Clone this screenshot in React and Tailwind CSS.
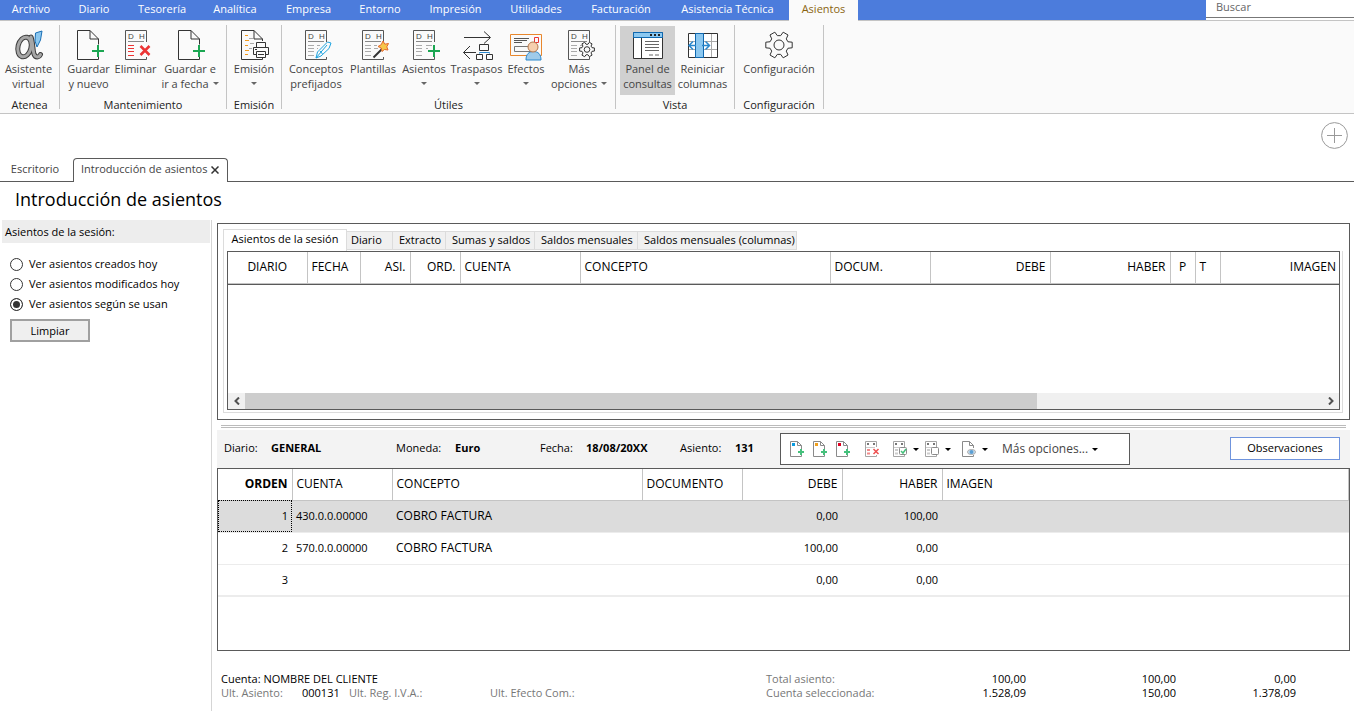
import { useState } from 'react';
import { clsx } from 'clsx';

const MENU = [
    { label: 'Archivo', width: 'w-[62px]' },
    { label: 'Diario', width: 'w-[64px]' },
    { label: 'Tesorería', width: 'w-[72px]' },
    { label: 'Analítica', width: 'w-[74px]' },
    { label: 'Empresa', width: 'w-[73px]' },
    { label: 'Entorno', width: 'w-[70px]' },
    { label: 'Impresión', width: 'w-[81px]' },
    { label: 'Utilidades', width: 'w-[80px]' },
    { label: 'Facturación', width: 'w-[90px]' },
    { label: 'Asistencia Técnica', width: 'w-[123px]' },
    { label: 'Asientos', width: 'w-[69px]', active: true },
];

/* ---------- Ribbon icons (32x32 grid) ---------- */

const Icon = ({ children }) => (
    <svg width="32" height="32" viewBox="0 0 32 32" fill="none" className="shrink-0" aria-hidden="true">
        {children}
    </svg>
);

const Plus = ({ x, y }) => (
    <path d={`M${x} ${y - 6}v12M${x - 6} ${y}h12`} stroke="#1ba652" strokeWidth="2" />
);

const AteneaIcon = () => (
    <Icon>
        <g stroke="#3c3c3c" strokeWidth="5" strokeLinecap="round">
            <ellipse cx="11.500" cy="18" rx="6.500" ry="10" transform="rotate(14 11.5 18)" />
            <path d="M18 8c2 5 1.500 12 3 17 1.500 4 5 3.500 6.500.500" />
        </g>
        <g stroke="#a6a6a6" strokeWidth="3" strokeLinecap="round">
            <ellipse cx="11.500" cy="18" rx="6.500" ry="10" transform="rotate(14 11.5 18)" />
            <path d="M18 8c2 5 1.500 12 3 17 1.500 4 5 3.500 6.500.500" />
        </g>
        <path d="M22.500 4 29 2l-1.500 9L24 18l-2-6z" fill="#8cc8f0" stroke="#1a6fb5" />
    </Icon>
);

const NewPageIcon = () => (
    <Icon>
        <path d="M25.5 15.500V10L17 1.500H4.500v29h21v-3M17 1.500V10h8.500" stroke="#333" />
        <Plus x={25} y={22} />
    </Icon>
);

// Debe / Haber sheet shared by several commands
const LedgerSheet = ({ lines = '#aaa', children }) => (
    <>
        <path d="M26.500 13V1.500h-21v29h21V28" stroke="#555" />
        <text x="8" y="10" fontSize="8" fill="#444" className="font-['Liberation_Sans',sans-serif]">D</text>
        <text x="19" y="10" fontSize="8" fill="#444" className="font-['Liberation_Sans',sans-serif]">H</text>
        <path d="M8 12.500h16" stroke="#888" />
        <path d="M8 16.500h6M8 19.500h6M8 22.500h6M8 26.500h6" stroke={lines} />
        {children}
    </>
);

const DeleteIcon = () => (
    <Icon>
        <LedgerSheet lines="#ec3434" />
        <path d="m20.500 17 9 9m0-9-9 9" stroke="#ec3434" strokeWidth="2.500" />
    </Icon>
);

const PrintIcon = () => (
    <Icon>
        <path d="M24.500 12v-2L16 1.500H3.500v29h21V28M16 1.500V10h8.500" stroke="#333" />
        <path d="M7 6.500h3M7 11.500h4M7 16.500h3M7 21.500h4M7 25.500h3" stroke="#f29a1f" />
        <path d="M11 9.500h4M12 14.500h4M11 19.500h3" stroke="#aaa" />
        <path d="M18.500 18v-4.500h9V18M18.500 25.500h-3V18.500h15v7h-3M18.500 22.500h9v6h-9zM20 25.500h6" stroke="#333" fill="#fafafa" />
        <path d="M17 20.500h2" stroke="#333" />
    </Icon>
);

const PenIcon = () => (
    <Icon>
        <LedgerSheet>
            <path d="M17 16.500h3M17 19.500h1" stroke="#aaa" />
        </LedgerSheet>
        <path d="m16 29 1.500-6L27.500 13l3.500 1-2 5.500-8 7.500z" fill="#fafafa" stroke="#1ba3e0" />
        <path d="m16 29 11-13M20 22l2.500 3" stroke="#1ba3e0" />
    </Icon>
);

const WandIcon = () => (
    <Icon>
        <LedgerSheet>
            <path d="M17 16.500h3M17 19.500h4" stroke="#aaa" />
        </LedgerSheet>
        <path d="m16.500 28.500 9-9" stroke="#333" strokeWidth="2" />
        <path d="m26 12 1.800 3.200 3.700-.7-1.700 3.300L31 21l-3.500-.5-2.500 2-.8-3.500-3.200-1.500 3.200-1.800z" fill="#f7c64a" stroke="#e5682a" />
    </Icon>
);

const AddEntryIcon = () => (
    <Icon>
        <LedgerSheet>
            <path d="M18 16.500h6M18 19.500h2" stroke="#aaa" />
        </LedgerSheet>
        <Plus x={26} y={22} />
    </Icon>
);

const TransferIcon = () => (
    <Icon>
        <path d="M3 8.500h26M23 2.500l6.500 6-6.500 6M15 23.500H2.500M9 17l-6.500 6.500L9 30" stroke="#333" />
        <path d="M18.500 15.500h9v6h-9zM15.500 25.500h6v5h-6zM25.500 25.500h6v5h-6z" stroke="#333" />
        <path d="M18.500 24.500v-1h10v1" stroke="#2a87cc" />
    </Icon>
);

const EffectsIcon = () => (
    <Icon>
        <path d="M.5 5.500h31v21H.5z" stroke="#e8872d" />
        <path d="M4 9.500h15M4 11.500h13M4 13.500h8" stroke="#555" />
        <path d="M24.500 8.500h4v5h-4z" stroke="#ec3434" />
        <path d="M4.500 17.500h17v5h-17z" stroke="#777" />
        <path d="M16 31c0-6 3-8.500 7.500-8.500S31 25 31 31z" fill="#9fcbea" stroke="#2a87cc" />
        <circle cx="23" cy="18" r="5" fill="#f6cfae" stroke="#b5784c" />
    </Icon>
);

// Six-toothed gear outline: root, tooth, root for every 60 degrees
const GEAR_PATH = `M${[0, 60, 120, 180, 240, 300]
    .flatMap((angle) => [
        [angle - 20, 9.5],
        [angle - 12, 13.5],
        [angle + 12, 13.5],
        [angle + 20, 9.5],
    ])
    .map(([deg, r]) => {
        const rad = (deg * Math.PI) / 180;
        return `${(r * Math.cos(rad)).toFixed(2)} ${(r * Math.sin(rad)).toFixed(2)}`;
    })
    .join('L')}Z`;

const Gear = ({ cx, cy, scale }) => (
    <g transform={`translate(${cx} ${cy}) scale(${scale})`} stroke="#333" strokeLinejoin="round">
        <path d={GEAR_PATH} fill="#fafafa" vectorEffect="non-scaling-stroke" />
        <circle r="5" vectorEffect="non-scaling-stroke" />
    </g>
);

const MoreIcon = () => (
    <Icon>
        <LedgerSheet>
            <path d="M17 16.500h2" stroke="#aaa" />
        </LedgerSheet>
        <Gear cx={24} cy={20.5} scale={0.56} />
    </Icon>
);

const PanelIcon = () => (
    <Icon>
        <path d="M1.500 3.500h29v26h-29z" fill="#fff" stroke="#333" />
        <path d="M1.500 3.500h29v5h-29z" fill="#8cc8f0" stroke="#0f68b0" />
        <path d="M18 6h2M22 6h2M26 6h2" stroke="#222" strokeWidth="2" />
        <path d="M9.500 9v20" stroke="#333" />
        <path d="M13 12.500h14M13 15.500h14M13 18.500h14M13 21.500h14M17 26h4M23 26h4" stroke="#666" />
    </Icon>
);

const ColumnsIcon = () => (
    <Icon>
        <path d="M1.500 4.500h29v24h-29z" fill="#fff" stroke="#333" />
        <path d="M2 12.500h28M2 20.500h28M24.500 5v23" stroke="#aaa" />
        <path d="M8.500 4.500h8v24h-8z" fill="#8cc8f0" stroke="#0f68b0" />
        <path d="M9 16.500H2M6 12.500l-4 4 4 4M15 16.500h8M18.500 12.500l4 4-4 4" stroke="#2a87cc" strokeWidth="1.500" />
    </Icon>
);

const SettingsIcon = () => (
    <Icon>
        <Gear cx={16} cy={16} scale={1} />
    </Icon>
);

const RIBBON = [
    {
        title: 'Atenea',
        width: 'w-[60px]',
        padding: 'px-0',
        items: [{ icon: AteneaIcon, lines: ['Asistente', 'virtual'], width: 'w-[57px]' }],
    },
    {
        title: 'Mantenimiento',
        width: 'w-[167px]',
        padding: 'pl-[2px]',
        items: [
            { icon: NewPageIcon, lines: ['Guardar', 'y nuevo'], width: 'w-[53px]' },
            { icon: DeleteIcon, lines: ['Eliminar'], width: 'w-[41px]' },
            { icon: NewPageIcon, lines: ['Guardar e', 'ir a fecha'], width: 'w-[68px]', arrow: true },
        ],
    },
    {
        title: 'Emisión',
        width: 'w-[55px]',
        padding: 'px-0',
        items: [{ icon: PrintIcon, lines: ['Emisión'], width: 'w-[54px]', arrow: true }],
    },
    {
        title: 'Útiles',
        width: 'w-[334px]',
        padding: 'pl-[4px]',
        items: [
            { icon: PenIcon, lines: ['Conceptos', 'prefijados'], width: 'w-[60px]' },
            { icon: WandIcon, lines: ['Plantillas'], width: 'w-[54px]' },
            { icon: AddEntryIcon, lines: ['Asientos'], width: 'w-[48px]', arrow: true },
            { icon: TransferIcon, lines: ['Traspasos'], width: 'w-[57px]', arrow: true },
            { icon: EffectsIcon, lines: ['Efectos'], width: 'w-[42px]', arrow: true },
            { icon: MoreIcon, lines: ['Más', 'opciones'], width: 'w-[64px]', arrow: true },
        ],
    },
    {
        title: 'Vista',
        width: 'w-[119px]',
        padding: 'pl-[4px]',
        items: [
            { icon: PanelIcon, lines: ['Panel de', 'consultas'], width: 'w-[55px]', pressed: true },
            { icon: ColumnsIcon, lines: ['Reiniciar', 'columnas'], width: 'w-[55px]' },
        ],
    },
    {
        title: 'Configuración',
        width: 'w-[89px]',
        padding: 'px-0',
        items: [{ icon: SettingsIcon, lines: ['Configuración'], width: 'w-[88px]' }],
    },
];

const Caret = ({ color = '#666' }) => (
    <svg width="6" height="3" viewBox="0 0 6 3" className="inline-block shrink-0" aria-hidden="true">
        <path d="M0 0h6L3 3z" fill={color} />
    </svg>
);

const RibbonButton = ({ item }) => {
    const IconComp = item.icon;
    return (
        <button
            type="button"
            className={clsx(
                'flex h-[69px] shrink-0 flex-col items-center pt-[3px] leading-[15px] whitespace-nowrap text-[#444]',
                item.width,
                item.pressed && 'bg-[#d0d0d0]'
            )}
        >
            <IconComp />
            <span>{item.lines[0]}</span>
            <span className="flex h-[15px] items-center gap-1">
                {item.lines[1]}
                {item.arrow && <Caret />}
            </span>
        </button>
    );
};

const Header = () => (
    <header>
        <div className="flex h-5 justify-between bg-[#4c7cdc]">
            <nav className="flex leading-[18px] text-white">
                {MENU.map((entry) => (
                    <button
                        key={entry.label}
                        type="button"
                        className={clsx(
                            'relative shrink-0 whitespace-nowrap',
                            entry.width,
                            entry.active ? 'z-10 h-[21px] bg-[#fafafa] pb-[3px] text-[#8a6410]' : 'h-[20px] pb-[2px]'
                        )}
                    >
                        {entry.label}
                    </button>
                ))}
            </nav>
            <div className="w-[148px] bg-white">
                <input
                    type="search"
                    aria-label="Buscar"
                    placeholder="Buscar"
                    className="block h-[18px] w-full border-b border-[#777] pb-[5px] pl-[10px] leading-[12px] outline-none placeholder:text-[#666]"
                />
            </div>
        </div>
        <div className="flex h-[94px] border-y border-[#c4c4c4] bg-[#fafafa] pt-1">
            {RIBBON.map((group) => (
                <section
                    key={group.title}
                    className={clsx('flex h-[84px] shrink-0 flex-col border-r border-[#c4c4c4] pt-px', group.width)}
                >
                    <div className={clsx('flex', group.padding)}>
                        {group.items.map((item) => (
                            <RibbonButton key={item.lines.join(' ')} item={item} />
                        ))}
                    </div>
                    <h2 className="pt-[2px] text-center leading-[16px] text-[#222]">{group.title}</h2>
                </section>
            ))}
        </div>
    </header>
);

const DocumentTabs = () => (
    <div>
        <div className="flex justify-end pt-2 pr-[6px]">
            <button type="button" aria-label="Añadir" className="h-[27px] w-[27px]">
                <svg width="27" height="27" viewBox="0 0 27 27" fill="none" stroke="#999">
                    <circle cx="13.5" cy="13.5" r="12.900" />
                    <path d="M6 13.500h15M13.500 6v15" />
                </svg>
            </button>
        </div>
        <div className="mt-[9px] flex h-[24px] text-[#444]">
            <button type="button" className="w-[73px] border-b border-[#5a5a5a] pr-[3px]">
                Escritorio
            </button>
            <div className="flex w-[155px] items-center justify-between rounded-t-[4px] border border-b-0 border-[#5a5a5a] pr-[8px] pb-[2px] pl-[7px] whitespace-nowrap">
                <button type="button">Introducción de asientos</button>
                <button type="button" aria-label="Cerrar">
                    <svg width="8" height="8" viewBox="0 0 8 8" stroke="#333" strokeWidth="1.500">
                        <path d="m.5.500 7 7m0-7-7 7" />
                    </svg>
                </button>
            </div>
            <div className="flex-1 border-b border-[#5a5a5a]" />
        </div>
    </div>
);

const FILTERS = ['Ver asientos creados hoy', 'Ver asientos modificados hoy', 'Ver asientos según se usan'];

const Sidebar = () => {
    const [filter, setFilter] = useState(FILTERS[2]);

    return (
        <aside className="w-[212px] shrink-0 border-r border-[#d5d5d5] pr-px pl-[2px]">
            <h2 className="h-[23px] bg-[#ededed] pl-[3px] leading-[23px]">Asientos de la sesión:</h2>
            <div className="flex flex-col pt-[11px] pl-2">
                {FILTERS.map((label) => (
                    <label key={label} className="flex h-5 items-center gap-[6px]">
                        <input
                            type="radio"
                            name="filtro"
                            checked={filter === label}
                            onChange={() => setFilter(label)}
                            className="h-[13px] w-[13px] appearance-none rounded-full border border-[#333] bg-white checked:bg-[#333] checked:shadow-[inset_0_0_0_2px_#fff]"
                        />
                        {label}
                    </label>
                ))}
                <button type="button" className="mt-[5px] h-[23px] w-[80px] border-2 border-[#a0a0a0] bg-[#efefef] pt-px">
                    Limpiar
                </button>
            </div>
        </aside>
    );
};

const QUERY_TABS = [
    { label: 'Diario', width: 'w-[46px]', padding: 'pl-[4px]' },
    { label: 'Extracto', width: 'w-[53px]', padding: 'pl-[6px]' },
    { label: 'Sumas y saldos', width: 'w-[89px]', padding: 'pl-[6px]' },
    { label: 'Saldos mensuales', width: 'w-[103px]', padding: 'pl-[6px]' },
    { label: 'Saldos mensuales (columnas)', width: 'w-[159px]', padding: 'pl-[6px]' },
];

const QUERY_COLUMNS = [
    { label: 'DIARIO', width: 'w-[79px]', align: 'text-center' },
    { label: 'FECHA', width: 'w-[53px]', align: 'text-left' },
    { label: 'ASI.', width: 'w-[50px]', align: 'text-right' },
    { label: 'ORD.', width: 'w-[50px]', align: 'text-right' },
    { label: 'CUENTA', width: 'w-[120px]', align: 'text-left' },
    { label: 'CONCEPTO', width: 'w-[250px]', align: 'text-left' },
    { label: 'DOCUM.', width: 'w-[100px]', align: 'text-left' },
    { label: 'DEBE', width: 'w-[120px]', align: 'text-right' },
    { label: 'HABER', width: 'w-[120px]', align: 'text-right' },
    { label: 'P', width: 'w-[25px]', align: 'text-center' },
    { label: 'T', width: 'w-[25px]', align: 'text-left' },
    { label: 'IMAGEN', width: 'w-auto', align: 'text-right' },
];

const QueryPanel = () => (
    <section className="border border-[#5a5a5a] pt-[5px] pr-[6px] pb-[6px] pl-[5px]">
        <div className="flex items-end whitespace-nowrap">
            <button type="button" className="h-[22px] w-[124px] border border-b-0 border-[#dcdcdc] pb-[2px]">
                Asientos de la sesión
            </button>
            {QUERY_TABS.map((tab) => (
                <button
                    key={tab.label}
                    type="button"
                    className={clsx(
                        'mb-px h-[19px] border border-l-0 border-[#dcdcdc] bg-[#f0f0f0] text-left',
                        tab.width,
                        tab.padding
                    )}
                >
                    {tab.label}
                </button>
            ))}
        </div>
        <div className="border border-t-0 border-[#dcdcdc] pr-[2px] pb-[2px] pl-[3px]">
            <div className="flex h-[159px] flex-col border border-[#5a5a5a]">
                <div className="border-b border-[#5a5a5a]">
                    <table className="w-full table-fixed text-[12px]">
                        <thead>
                            <tr className="h-[31px] border-b border-[#c4c4c4]">
                                {QUERY_COLUMNS.map((col) => (
                                    <th
                                        key={col.label}
                                        className={clsx(
                                            'border-r border-[#c4c4c4] px-[4px] font-normal last:border-r-0 last:pr-[3px]',
                                            col.width,
                                            col.align
                                        )}
                                    >
                                        {col.label}
                                    </th>
                                ))}
                            </tr>
                        </thead>
                    </table>
                </div>
                <div className="mt-auto flex h-[16px] items-center bg-[#f0f0f0]">
                    <button type="button" aria-label="Desplazar a la izquierda" className="flex h-full w-[17px] items-center justify-center">
                        <svg width="6" height="8" viewBox="0 0 6 8" fill="none" stroke="#505050" strokeWidth="2">
                            <path d="M5 .5 1.500 4 5 7.500" />
                        </svg>
                    </button>
                    <div className="flex h-full flex-1">
                        <div className="flex-[147] bg-[#cdcdcd]" />
                        <div className="flex-[53]" />
                    </div>
                    <button type="button" aria-label="Desplazar a la derecha" className="flex h-full w-[17px] items-center justify-center">
                        <svg width="6" height="8" viewBox="0 0 6 8" fill="none" stroke="#505050" strokeWidth="2">
                            <path d="M1 .5 4.500 4 1 7.500" />
                        </svg>
                    </button>
                </div>
            </div>
        </div>
    </section>
);

/* ---------- Entry toolbar icons (16x18 grid) ---------- */

const SmallIcon = ({ children }) => (
    <svg width="16" height="18" viewBox="0 0 16 18" fill="none" aria-hidden="true">
        {children}
    </svg>
);

const AddLineIcon = ({ color }) => (
    <SmallIcon>
        <path d="M12.500 9V5.500l-4-4h-7v15h11V15M8.500 1.500v4h4" stroke="#8a8a8a" />
        <path d="M3 3h3v3H3z" fill={color} />
        <path d="M12 9v6M9 12h6" stroke="#45c07c" strokeWidth="2" />
    </SmallIcon>
);

const SmallLedger = ({ lines = '#ccc', children }) => (
    <SmallIcon>
        <path d="M12.500 7V1.500h-11v15h11V15" stroke="#a5a5a5" />
        <path d="M3 4h2M9 4h2" stroke="#777" strokeWidth="2" />
        <path d="M2 7.500h9" stroke="#ccc" />
        <path d="M3 10h3M3 13.500h3" stroke={lines} strokeWidth="2" />
        {children}
    </SmallIcon>
);

const ToolbarButton = ({ label, icon, arrow, width }) => (
    <button type="button" aria-label={label} className={clsx('flex h-full items-center gap-[5px]', width)}>
        {icon}
        {arrow && <Caret color="#000" />}
    </button>
);

const EntryToolbar = () => (
    <div className="flex h-[32px] w-[350px] shrink-0 items-center border border-[#5a5a5a] bg-white pl-2">
        <ToolbarButton label="Añadir apunte" width="w-[23px]" icon={<AddLineIcon color="#0a9be0" />} />
        <ToolbarButton label="Insertar apunte" width="w-[23px]" icon={<AddLineIcon color="#f0a01e" />} />
        <ToolbarButton label="Duplicar apunte" width="w-[29px]" icon={<AddLineIcon color="#e00020" />} />
        <ToolbarButton
            label="Eliminar apunte"
            width="w-[28px]"
            icon={
                <SmallLedger lines="#f08a8a">
                    <path d="m9.500 9 5 5m0-5-5 5" stroke="#ee5050" strokeWidth="1.500" />
                </SmallLedger>
            }
        />
        <ToolbarButton
            label="Marcar apunte"
            width="w-[32px]"
            arrow
            icon={
                <SmallLedger>
                    <rect x="7.500" y="7.500" width="7" height="7" rx="1" fill="#fff" stroke="#8a8a8a" />
                    <path d="m9 11 2 2 3-4" stroke="#45c07c" strokeWidth="1.500" />
                </SmallLedger>
            }
        />
        <ToolbarButton
            label="Desmarcar apunte"
            width="w-[37px]"
            arrow
            icon={
                <SmallLedger>
                    <rect x="7.500" y="7.500" width="7" height="7" rx="1" fill="#fff" stroke="#8a8a8a" />
                </SmallLedger>
            }
        />
        <ToolbarButton
            label="Ver documento"
            width="w-[41px]"
            arrow
            icon={
                <SmallIcon>
                    <path d="M12.500 8V5.500l-4-4h-7v15h11V15M8.500 1.500v4h4" stroke="#8a8a8a" />
                    <ellipse cx="10.500" cy="12" rx="4" ry="2.500" fill="#cfe3f2" stroke="#aaa" />
                    <circle cx="10.500" cy="12" r="2" fill="#5b9fd4" />
                </SmallIcon>
            }
        />
        <button type="button" className="flex items-center gap-1 text-[12px] whitespace-nowrap text-[#444]">
            Más opciones...
            <Caret color="#000" />
        </button>
    </div>
);

const ENTRY_FIELDS = [
    { label: 'Diario:', value: 'GENERAL', labelWidth: 'w-[47px]', valueWidth: 'w-[125px]' },
    { label: 'Moneda:', value: 'Euro', labelWidth: 'w-[59px]', valueWidth: 'w-[85px]' },
    { label: 'Fecha:', value: '18/08/20XX', labelWidth: 'w-[46px]', valueWidth: 'w-[94px]' },
    { label: 'Asiento:', value: '131', labelWidth: 'w-[55px]', valueWidth: 'w-[45px]' },
];

const EntryBar = () => (
    <div className="flex h-[38px] items-center bg-[#f3f3f3] pl-[7px]">
        <dl className="flex shrink-0 pb-[2px]">
            {ENTRY_FIELDS.map((field) => (
                <div key={field.label} className="flex">
                    <dt className={field.labelWidth}>{field.label}</dt>
                    <dd className={clsx('font-bold', field.valueWidth)}>{field.value}</dd>
                </div>
            ))}
        </dl>
        <EntryToolbar />
        <button type="button" className="mr-[10px] mb-[2px] ml-auto h-[23px] w-[110px] border border-[#6f94dd] bg-white">
            Observaciones
        </button>
    </div>
);

const ENTRIES = [
    { order: 1, account: '430.0.0.00000', concept: 'COBRO FACTURA', debit: '0,00', credit: '100,00' },
    { order: 2, account: '570.0.0.00000', concept: 'COBRO FACTURA', debit: '100,00', credit: '0,00' },
    { order: 3, account: '', concept: '', debit: '0,00', credit: '0,00' },
];

const EntryTable = () => {
    const [selected, setSelected] = useState(1);
    const th = 'border-r border-[#c4c4c4] px-[4px] font-normal';

    return (
        <div className="flex-1 border border-[#5a5a5a]">
            <table className="w-full table-fixed text-[12px]">
                <thead>
                    <tr className="h-[31px] border-b border-[#c4c4c4] text-left">
                        <th className="w-[74px] border-r border-[#c4c4c4] px-[4px] text-right font-bold">ORDEN</th>
                        <th className={clsx(th, 'w-[100px]')}>CUENTA</th>
                        <th className={clsx(th, 'w-[250px]')}>CONCEPTO</th>
                        <th className={clsx(th, 'w-[100px]')}>DOCUMENTO</th>
                        <th className={clsx(th, 'w-[100px] text-right')}>DEBE</th>
                        <th className={clsx(th, 'w-[100px] text-right')}>HABER</th>
                        <th className={th}>IMAGEN</th>
                    </tr>
                </thead>
                <tbody className="text-[11px]">
                    {ENTRIES.map((entry) => (
                        <tr
                            key={entry.order}
                            onClick={() => setSelected(entry.order)}
                            className={clsx(
                                'h-8 border-b border-[#ececec] last:border-b-2',
                                selected === entry.order && 'bg-[#dcdcdc]'
                            )}
                        >
                            <td
                                className={clsx(
                                    'px-[4px] text-right',
                                    selected === entry.order && 'outline-1 -outline-offset-1 outline-black outline-dotted'
                                )}
                            >
                                {entry.order}
                            </td>
                            <td className="px-[4px]">{entry.account}</td>
                            <td className="px-[4px] text-[12px]">{entry.concept}</td>
                            <td />
                            <td className="px-[4px] text-right">{entry.debit}</td>
                            <td className="px-[4px] text-right">{entry.credit}</td>
                            <td />
                        </tr>
                    ))}
                </tbody>
            </table>
        </div>
    );
};

const Totals = () => (
    <footer className="flex justify-between pt-[21px] pr-[54px] pb-[11px] pl-[4px] leading-[14px]">
        <div>
            <p>Cuenta: NOMBRE DEL CLIENTE</p>
            <p className="flex text-[#777]">
                <span className="w-[81px]">Ult. Asiento:</span>
                <span className="w-[47px] text-black">000131</span>
                <span className="w-[141px]">Ult. Reg. I.V.A.:</span>
                <span>Ult. Efecto Com.:</span>
            </p>
        </div>
        <table className="text-right font-medium">
            <tbody>
                <tr>
                    <th className="w-[140px] text-left font-normal text-[#777]">Total asiento:</th>
                    <td className="w-[120px]">100,00</td>
                    <td className="w-[150px]">100,00</td>
                    <td className="w-[120px]">0,00</td>
                </tr>
                <tr>
                    <th className="text-left font-normal text-[#777]">Cuenta seleccionada:</th>
                    <td>1.528,09</td>
                    <td>150,00</td>
                    <td>1.378,09</td>
                </tr>
            </tbody>
        </table>
    </footer>
);

const App = () => (
    <div className="flex min-h-screen flex-col bg-white font-['Open_Sans','Noto_Sans',sans-serif] text-[11px] text-black">
        <Header />
        <DocumentTabs />
        <h1 className="h-[38px] pl-[15px] text-[18px] leading-[35px]">Introducción de asientos</h1>
        <div className="flex flex-1">
            <Sidebar />
            <main className="flex min-w-0 flex-1 flex-col pt-[3px] pr-1 pl-[5px]">
                <QueryPanel />
                <div className="mx-1 mt-[5px] mb-[2px] h-[3px] border-y border-[#bbb]" />
                <EntryBar />
                <EntryTable />
                <Totals />
            </main>
        </div>
    </div>
);

export default App;
